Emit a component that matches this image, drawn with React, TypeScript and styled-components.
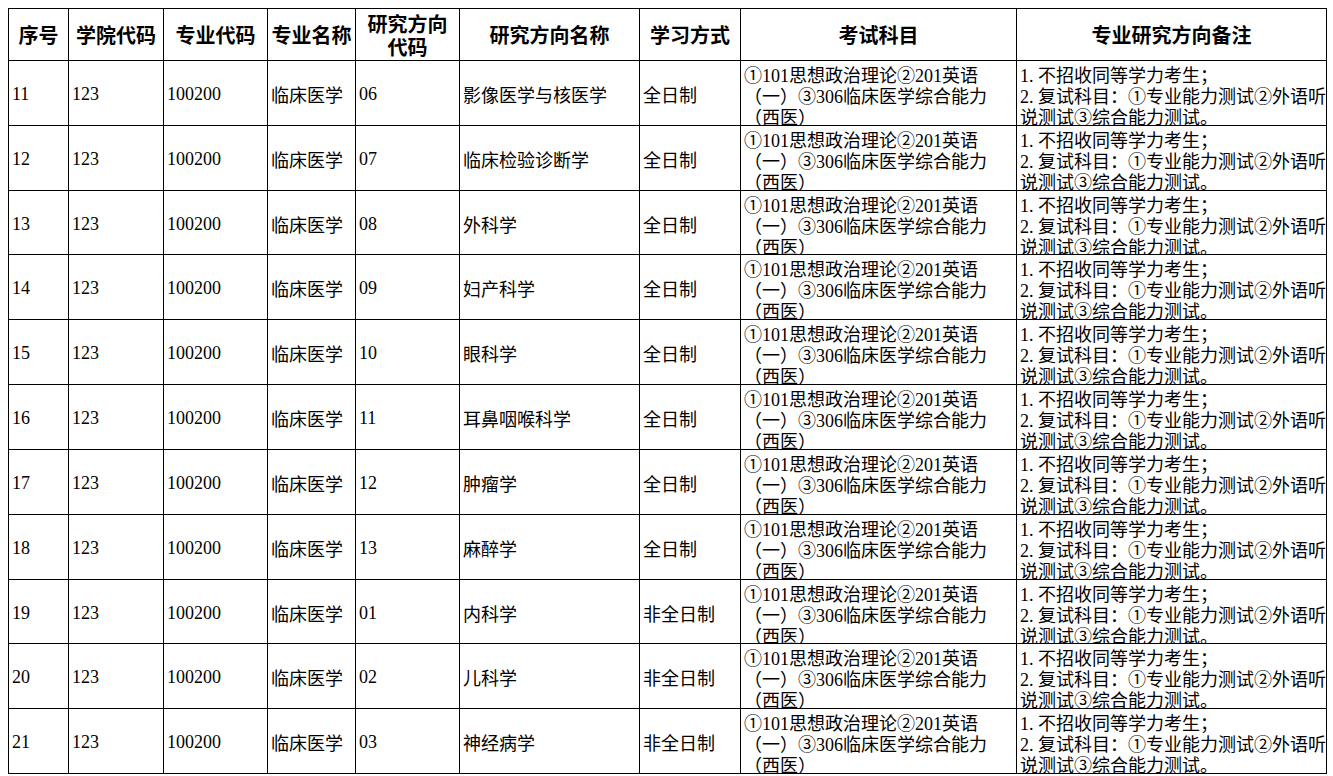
import styled, { createGlobalStyle } from "styled-components";

const GlobalStyle = createGlobalStyle`
  html, body {
    margin: 0;
    background: #fff;
  }
  body {
    padding: 8px;
    font-family: "Liberation Serif", "Noto Sans CJK SC", serif;
    color: #000;
  }
`;

const Sheet = styled.div`
  display: grid;
  grid-template-columns: 59px 94px 103px 87px 103px 179px 100px 275px 309px;
  grid-template-rows: 51px 64px 64px 63px 64px 64px 64px 64px 64px 63px 64px 64px;
  gap: 1px;
  padding: 1px;
  background: #000;
  width: max-content;
`;

const Row = styled.div`
  display: contents;
`;

const HeadCell = styled.div`
  background: #fff;
  display: flex;
  align-items: center;
  justify-content: center;
  text-align: center;
  font-family: "Noto Sans CJK SC", sans-serif;
  font-size: 20px;
  font-weight: 700;
  line-height: 23px;
  overflow: hidden;
`;

const Cell = styled.div<{ $cjk?: boolean }>`
  background: #fff;
  display: flex;
  align-items: center;
  padding: 3px 0 0 3px;
  font-family: ${({ $cjk }) =>
    $cjk ? `"Noto Sans CJK SC", sans-serif` : `"Liberation Serif", "Noto Sans CJK SC", serif`};
  font-size: 18px;
  line-height: 21px;
  white-space: nowrap;
  overflow: hidden;
`;

const TextBlock = styled.div`
  background: #fff;
  padding: 5px 0 0 3px;
  font-family: "Liberation Serif", "Noto Sans CJK SC", serif;
  font-size: 18px;
  line-height: 21px;
  white-space: nowrap;
  overflow: hidden;
`;

const Line = styled.div``;

const headers = [
  "序号",
  "学院代码",
  "专业代码",
  "专业名称",
  "研究方向\n代码",
  "研究方向名称",
  "学习方式",
  "考试科目",
  "专业研究方向备注",
];

const rows = [
  ["11", "06", "影像医学与核医学", "全日制"],
  ["12", "07", "临床检验诊断学", "全日制"],
  ["13", "08", "外科学", "全日制"],
  ["14", "09", "妇产科学", "全日制"],
  ["15", "10", "眼科学", "全日制"],
  ["16", "11", "耳鼻咽喉科学", "全日制"],
  ["17", "12", "肿瘤学", "全日制"],
  ["18", "13", "麻醉学", "全日制"],
  ["19", "01", "内科学", "非全日制"],
  ["20", "02", "儿科学", "非全日制"],
  ["21", "03", "神经病学", "非全日制"],
];

const exam = ["①101思想政治理论②201英语", "（一）③306临床医学综合能力", "（西医）"];
const notes = ["1. 不招收同等学力考生；", "2. 复试科目：①专业能力测试②外语听", "说测试③综合能力测试。"];

export default function App() {
  return (
    <>
      <GlobalStyle />
      <Sheet>
        <Row>
          {headers.map((h) => (
            <HeadCell key={h}>
              <div>
                {h.split("\n").map((part) => (
                  <Line key={part}>{part}</Line>
                ))}
              </div>
            </HeadCell>
          ))}
        </Row>
        {rows.map(([no, code, name, mode]) => (
          <Row key={no}>
            <Cell>{no}</Cell>
            <Cell>123</Cell>
            <Cell>100200</Cell>
            <Cell $cjk>临床医学</Cell>
            <Cell>{code}</Cell>
            <Cell $cjk>{name}</Cell>
            <Cell $cjk>{mode}</Cell>
            <TextBlock>
              {exam.map((l) => (
                <Line key={l}>{l}</Line>
              ))}
            </TextBlock>
            <TextBlock>
              {notes.map((l) => (
                <Line key={l}>{l}</Line>
              ))}
            </TextBlock>
          </Row>
        ))}
      </Sheet>
    </>
  );
}
